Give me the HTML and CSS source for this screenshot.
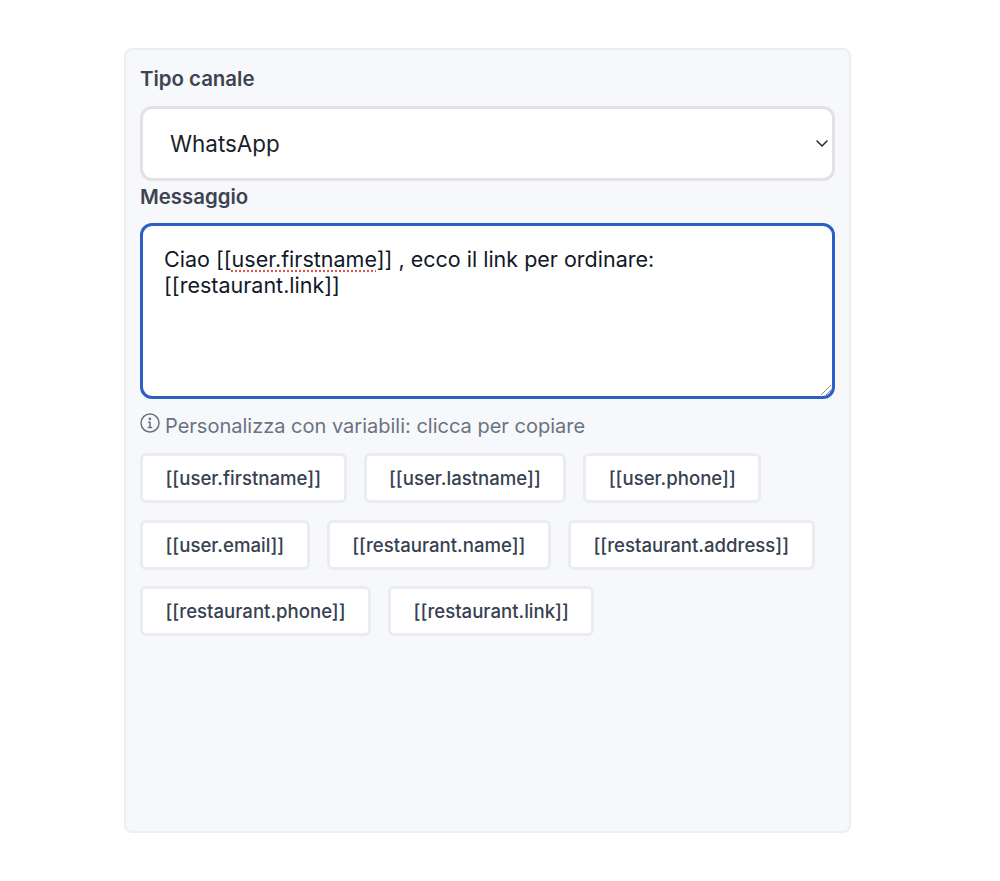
FILE: index.html
```html
<!DOCTYPE html>
<html lang="it">
<head>
    <meta charset="UTF-8">
    <meta name="viewport" content="width=device-width, initial-scale=1.0">
    <title>Messaggio</title>
    <link rel="stylesheet" href="styles.css">
</head>
<body>
    <form class="card">
        <label class="field-label" for="channel">Tipo canale</label>
        <div class="select-wrap">
            <select id="channel" class="select">
                <option>WhatsApp</option>
            </select>
            <svg class="chevron" width="14" height="14" viewBox="0 0 14 14" fill="none" stroke="#2b2f36" stroke-width="1.6" stroke-linecap="round" stroke-linejoin="round"><path d="M2 5l5 5 5-5"/></svg>
        </div>
        <label class="field-label message-label">Messaggio</label>
        <div class="message" role="textbox" contenteditable="true" spellcheck="false">
            <div>Ciao [[<span class="misspelt">user.firstname</span>]] , ecco il link per ordinare:</div>
            <div>[[restaurant.link]]</div>
            <svg class="grip" contenteditable="false" width="12" height="12" viewBox="0 0 12 12" fill="none" stroke="#8a8a8a" stroke-width="1"><path d="M1 11L11 1M6 11l5-5"/></svg>
        </div>
        <p class="hint">
            <svg class="hint-icon" width="20" height="20" viewBox="0 0 20 20" fill="none" stroke="#6b7280" stroke-width="1.5" stroke-linecap="round"><circle cx="10" cy="10" r="9"/><path d="M10 9.2v5M8.4 14.4h3.2M8.6 9.2H10"/><circle cx="9.9" cy="5.9" r=".6" fill="#6b7280"/></svg>
            Personalizza con variabili: clicca per copiare
        </p>
        <div class="variables">
            <button type="button" class="variable">[[user.firstname]]</button>
            <button type="button" class="variable">[[user.lastname]]</button>
            <button type="button" class="variable">[[user.phone]]</button>
            <button type="button" class="variable">[[user.email]]</button>
            <button type="button" class="variable">[[restaurant.name]]</button>
            <button type="button" class="variable">[[restaurant.address]]</button>
            <button type="button" class="variable">[[restaurant.phone]]</button>
            <button type="button" class="variable">[[restaurant.link]]</button>
        </div>
    </form>
</body>
</html>
```

FILE: styles.css
```css
* {
    box-sizing: border-box;
}
body {
    margin: 0;
    background-color: #fff;
    font-family: Inter, "Open Sans", sans-serif;
    color: #111827;
}
.card {
    width: 727px;
    height: 785px;
    margin: 48px 0 0 124px;
    padding: 15px 14px;
    background-color: #f6f8fb;
    border: 2px solid #eceef1;
    border-radius: 8px;
}
.field-label {
    display: block;
    height: 30px;
    font-size: 20.4px;
    line-height: 28px;
    font-weight: 600;
    color: #3d4350;
}
.select-wrap {
    position: relative;
    margin-top: 11px;
}
.select {
    display: block;
    width: 100%;
    height: 75px;
    padding: 0 27px;
    appearance: none;
    background-color: #fff;
    border: 3px solid #e2e2e2;
    border-radius: 12px;
    font-family: inherit;
    font-size: 22.4px;
    color: #1a1f29;
}
.chevron {
    position: absolute;
    top: 30px;
    right: 6px;
}
.message-label {
    margin-top: 2px;
}
.message {
    position: relative;
    height: 176px;
    margin-top: 10px;
    padding: 20px 21px;
    background-color: #fff;
    border: 3px solid #2a5fc4;
    border-radius: 12px;
    font-size: 21.5px;
    line-height: 26px;
    color: #111827;
    outline: none;
}
.misspelt {
    text-decoration: underline dotted #e0544f;
    text-underline-offset: 3px;
}
.grip {
    position: absolute;
    right: 0;
    bottom: 0;
}
.hint {
    display: flex;
    align-items: flex-start;
    gap: 5px;
    height: 24px;
    margin: 14px 0 0;
    font-size: 20px;
    line-height: 26px;
    color: #6b7280;
}
.hint-icon {
    flex: none;
}
.variables {
    display: flex;
    flex-wrap: wrap;
    gap: 16.5px 17px;
    margin-top: 16px;
}
.variable {
    height: 50px;
    padding: 0 22.5px;
    background-color: #fff;
    border: 3px solid #eaecef;
    border-radius: 6px;
    font-family: inherit;
    font-size: 18.6px;
    font-weight: 500;
    color: #374151;
    cursor: pointer;
}
```
